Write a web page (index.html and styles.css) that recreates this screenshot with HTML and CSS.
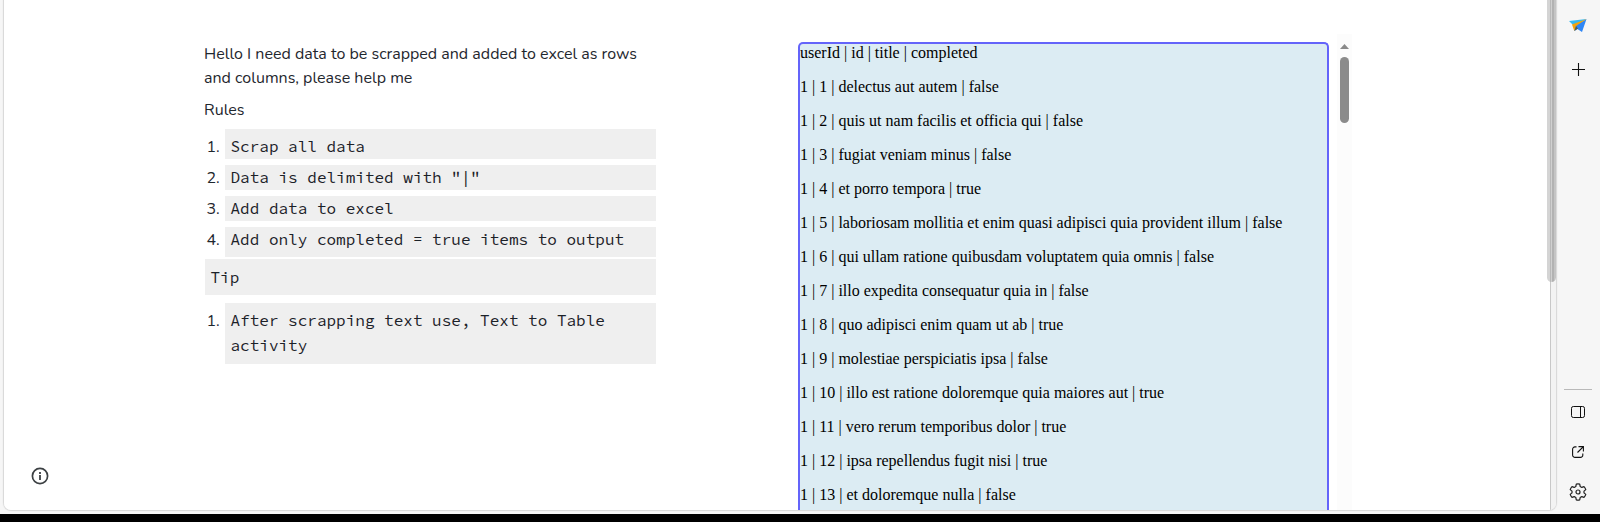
FILE: index.html
```
<!DOCTYPE html>
<html lang="en">
<head>
<meta charset="utf-8">
<title>Scrape data to Excel</title>
<link rel="stylesheet" href="styles.css">
</head>
<body>
<div class="window">
  <main class="page">
    <section class="brief">
      <p>Hello I need data to be scrapped and added to excel as rows<br>and columns, please help me</p>
      <p class="heading">Rules</p>
      <ol class="rules">
        <li class="tall-top"><span class="num">1.</span><code>Scrap all data</code></li>
        <li><span class="num">2.</span><code>Data is delimited with "|"</code></li>
        <li><span class="num">3.</span><code>Add data to excel</code></li>
        <li class="tall-bottom"><span class="num">4.</span><code>Add only completed = true items to output</code></li>
      </ol>
      <pre class="tip">Tip</pre>
      <ol class="rules after">
        <li class="tall-top tall-bottom"><span class="num">1.</span><code>After scrapping text use, Text to Table<br>activity</code></li>
      </ol>
    </section>
    <section class="data">
      <p>userId | id | title | completed</p>
      <p>1 | 1 | delectus aut autem | false</p>
      <p>1 | 2 | quis ut nam facilis et officia qui | false</p>
      <p>1 | 3 | fugiat veniam minus | false</p>
      <p>1 | 4 | et porro tempora | true</p>
      <p>1 | 5 | laboriosam mollitia et enim quasi adipisci quia provident illum | false</p>
      <p>1 | 6 | qui ullam ratione quibusdam voluptatem quia omnis | false</p>
      <p>1 | 7 | illo expedita consequatur quia in | false</p>
      <p>1 | 8 | quo adipisci enim quam ut ab | true</p>
      <p>1 | 9 | molestiae perspiciatis ipsa | false</p>
      <p>1 | 10 | illo est ratione doloremque quia maiores aut | true</p>
      <p>1 | 11 | vero rerum temporibus dolor | true</p>
      <p>1 | 12 | ipsa repellendus fugit nisi | true</p>
      <p>1 | 13 | et doloremque nulla | false</p>
    </section>
    <div class="track"><div class="arrow"></div><div class="thumb"></div></div>
    <svg class="info" width="18" height="18" viewBox="0 0 18 18"><circle cx="9" cy="9" r="7.6" fill="none" stroke="#3c4043" stroke-width="1.7"/><path d="M9 5v2M9 8v5" stroke="#3c4043" stroke-width="1.8"/></svg>
    <div class="outer-thumb"></div>
  </main>
  <aside class="sidebar">
    <svg class="plane" width="18" height="14" viewBox="0 0 18 14"><path d="M0 2 17.500 0 5 7z" fill="#36b8f0"/><path d="M17.500 0 13 13 8.500 10 5.500 12 5 7z" fill="#2f86f5"/><path d="M17.500 0 3 5.500 5.300 12 7 7z" fill="#f5a30a"/><path d="M5.300 12 7 7 9 9.500z" fill="#5c5e48"/></svg>
    <svg class="plus" width="13" height="13" viewBox="0 0 13 13"><path d="M6.500 0v13M0 6.500h13" stroke="#111" stroke-width="1.100"/></svg>
    <div class="divider"></div>
    <svg class="panel" width="14" height="12" viewBox="0 0 14 12" fill="none" stroke="#111"><rect x=".5" y=".5" width="13" height="11" rx="1.800"/><path d="M9.500 .5v11"/></svg>
    <svg class="open" width="12" height="12" viewBox="0 0 12 12" fill="none" stroke="#111" stroke-width="1.100"><path d="M4.500 .9H3A2.300 2.300 0 0 0 .6 3.200V9A2.400 2.400 0 0 0 3 11.400H8.500A2.300 2.300 0 0 0 10.800 9V7.500M6.500 .6H11.400V5.500M11.400 .6 5.500 6.500"/></svg>
    <svg class="gear" width="18" height="18" viewBox="0 0 18 18" fill="none" stroke="#222" stroke-width="1.200" stroke-linejoin="round"><path d="M7.300 1.200Q9 .7 10.700 1.200L11.200 3.500 12.800 4.400 15 3.600Q16.200 4.800 16.800 6.600L15 8.100V9.900L16.800 11.400Q16.200 13.200 15 14.400L12.800 13.600 11.200 14.500 10.700 16.800Q9 17.300 7.300 16.800L6.800 14.500 5.200 13.600 3 14.400Q1.800 13.200 1.200 11.400L3 9.900V8.100L1.200 6.600Q1.800 4.800 3 3.600L5.200 4.400 6.800 3.500z"/><circle cx="9" cy="9" r="2"/></svg>
  </aside>
</div>
</body>
</html>
```
FILE: styles.css
```
* { box-sizing: border-box; }
body { margin: 0; height: 522px; overflow: hidden; background: #000; }
p, ol, pre { margin: 0; padding: 0; }
svg { display: block; flex: none; }

.window { display: flex; height: 514px; padding-left: 4px; background: #f6f6f6; }
.page {
  position: relative; display: flex; width: 1552px; height: 510px; flex: none;
  background: linear-gradient(to right, #fff 1546px, #c8c8c8 1546px, #c8c8c8 1547px, #f3f3f3 1547px);
  border-radius: 0 0 7px 7px; overflow: hidden;
  box-shadow: 0 0 1px 1px #d8d8d8;
}

.brief { width: 452px; margin-left: 200px; padding-top: 42px; color: #1f272e; font: 16px/24px Nunito, "Open Sans", sans-serif; white-space: nowrap; }
.heading { margin-top: 8px; }
.rules { list-style: none; display: flex; flex-direction: column; gap: 6px; margin-top: 7px; }
.rules.after { margin-top: 8px; }
.rules li { display: flex; line-height: 25px; }
.num { width: 21px; padding-left: 2.5px; line-height: 27px; height: 25px; }
.rules code { flex: 1; padding-left: 5.5px; }
code, .tip { background: #efefef; color: #1b2128; font: 16px/25px "Source Code Pro", "Liberation Mono", monospace; }
.tall-top .num, .tall-top code { padding-top: 5px; }
.tall-bottom code { padding-bottom: 5px; }
.tall-bottom.tall-top code { padding-bottom: 6px; }
.tip { margin: 2px 0 0 1px; height: 36px; padding: 6px 0 0 5.5px; }

.data {
  width: 531px; height: 468px; margin: 42px 0 0 142px; flex: none; overflow: hidden;
  border: 2px solid #6464fa; border-bottom: 0; border-radius: 5px 5px 0 0;
  background: #dcecf3; color: #000; font: 16px/18px "Liberation Serif", serif; white-space: nowrap;
}
.data p { height: 34px; }

.track { width: 15px; height: 480px; margin: 34px 0 0 8px; padding: 10px 3px 0; background: #fcfcfc; }
.arrow { height: 5px; background: #8a8a8a; clip-path: polygon(50% 0, 100% 100%, 0 100%); }
.thumb { height: 66px; margin-top: 8px; border-radius: 5px; background: #8b8b8b; }

.info { position: absolute; left: 27px; top: 467px; }
.outer-thumb { position: absolute; right: 0; top: 0; width: 9px; height: 282px; border-radius: 0 0 5px 5px; background: linear-gradient(to right, #d4d4d4 0 3px, #b9b9b9 3px 4px, #d0d0d0 4px 5px, #b2b2b2 5px 7px, #c4c4c4 7px); }

.sidebar { display: flex; flex-direction: column; align-items: center; width: 44px; padding: 19px 0 0 0; }
.plus { margin-top: 30px; }
.divider { width: 28px; height: 1px; margin: 313px 0 16px; background: #b9b9b9; }
.open { margin-top: 28px; }
.gear { margin-top: 25px; }
```
